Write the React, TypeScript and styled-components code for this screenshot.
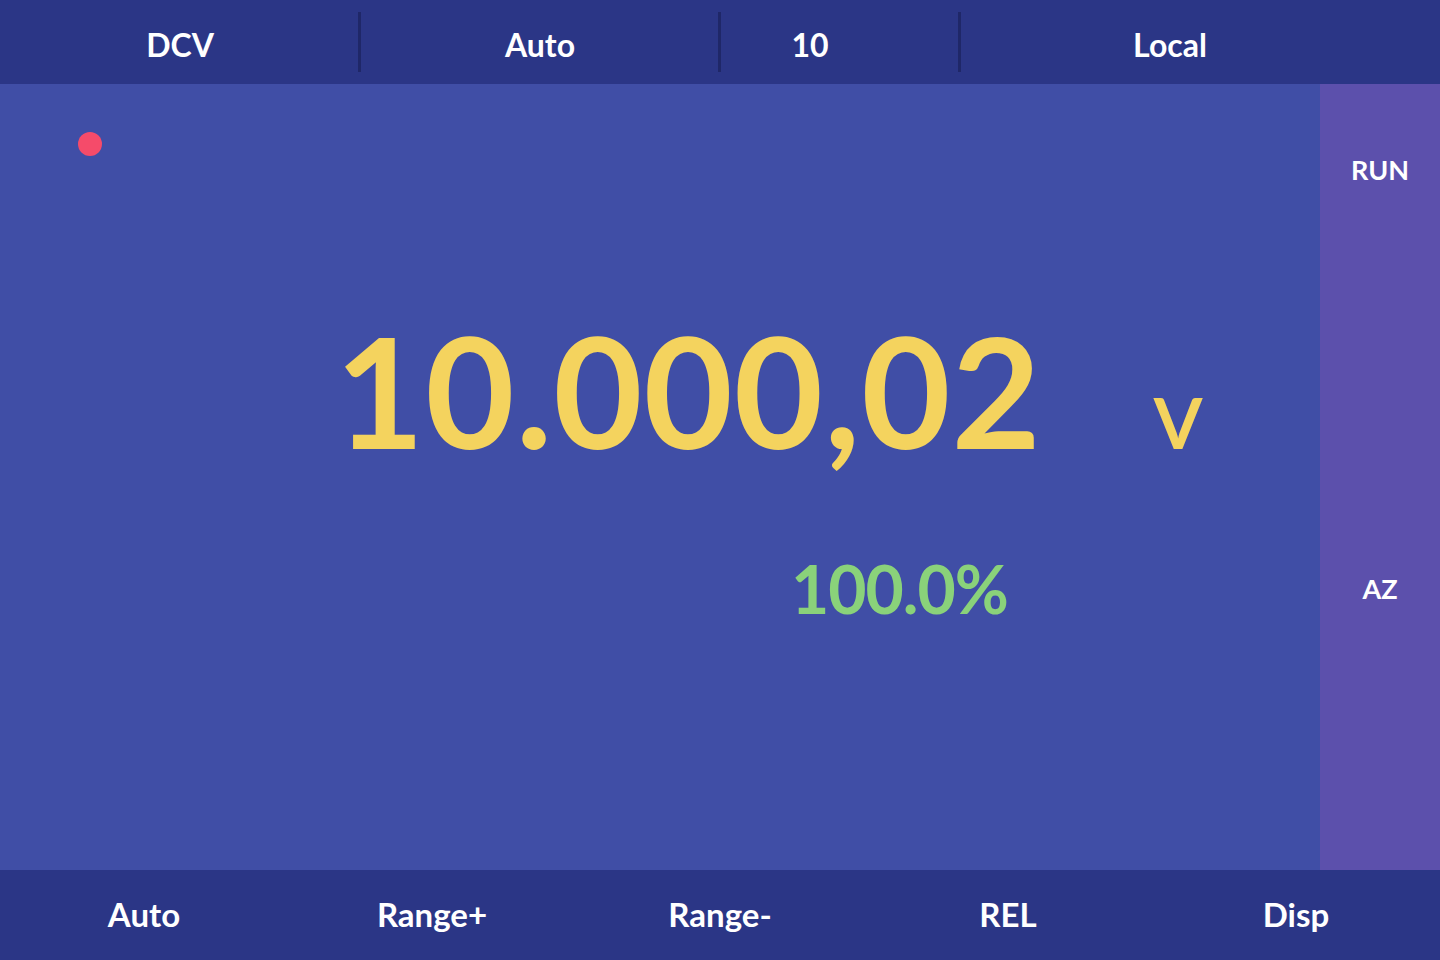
import * as React from 'react';
import styled, { createGlobalStyle } from 'styled-components';

const GlobalStyle = createGlobalStyle`
  html, body {
    margin: 0;
    padding: 0;
    background: #2b3686;
  }
  body {
    font-family: Lato, "Open Sans", sans-serif;
  }
`;

const Screen = styled.div`
  width: 1440px;
  height: 960px;
  display: grid;
  grid-template-rows: 84px 786px 90px;
  overflow: hidden;
`;

const StatusBar = styled.div`
  display: grid;
  grid-template-columns: 360px 360px 240px 420px 1fr;
  align-items: center;
  background: #2b3686;
`;

const StatusCell = styled.div<{ $divider?: boolean; $padRight?: number }>`
  position: relative;
  height: 60px;
  display: flex;
  align-items: center;
  justify-content: center;
  color: #ffffff;
  font-weight: 700;
  font-size: 32px;
  padding-top: 4px;
  padding-right: ${(p) => p.$padRight ?? 0}px;
  box-sizing: border-box;

  &::before {
    content: '';
    display: ${(p) => (p.$divider ? 'block' : 'none')};
    position: absolute;
    left: -2px;
    top: 0;
    bottom: 0;
    width: 3px;
    background: #1f2768;
  }
`;

const Middle = styled.div`
  display: grid;
  grid-template-columns: 1320px 120px;
`;

const Display = styled.div`
  background: #404ea6;
  display: flex;
  flex-direction: column;
`;

const Indicator = styled.div<{ $color: string }>`
  width: 24px;
  height: 24px;
  border-radius: 50%;
  background: ${(p) => p.$color};
  margin: 48px 0 0 78px;
`;

const Reading = styled.div`
  display: flex;
  align-items: baseline;
  padding-left: 335px;
  margin-top: 157px;
`;

const Value = styled.span`
  color: #f4d35e;
  font-weight: 700;
  font-size: 154px;
  line-height: 1;
  letter-spacing: 1px;
`;

const Unit = styled.span`
  color: #f4d35e;
  font-weight: 700;
  font-size: 70px;
  line-height: 1;
  margin-left: 112px;
`;

const Percent = styled.div`
  color: #8ad27a;
  font-weight: 700;
  font-size: 66px;
  line-height: 1;
  padding-left: 791px;
  margin-top: 89px;
  letter-spacing: -1px;
`;

const SidePanel = styled.div`
  background: #5c50ac;
  display: flex;
  flex-direction: column;
  align-items: center;
`;

const SideLabel = styled.div<{ $top: number }>`
  color: #ffffff;
  font-weight: 700;
  font-size: 27px;
  margin-top: ${(p) => p.$top}px;
`;

const SoftKeys = styled.div`
  display: grid;
  grid-template-columns: repeat(5, 1fr);
  align-items: center;
  background: #2b3686;
  padding-bottom: 2px;
`;

const SoftKey = styled.div`
  text-align: center;
  color: #ffffff;
  font-weight: 700;
  font-size: 33px;
`;

const status = [
  { label: 'DCV', divider: false, pad: 0 },
  { label: 'Auto', divider: true, pad: 0 },
  { label: '10', divider: true, pad: 60 },
  { label: 'Local', divider: true, pad: 0 },
];

const keys = ['Auto', 'Range+', 'Range-', 'REL', 'Disp'];

export default function App() {
  return (
    <>
      <GlobalStyle />
      <Screen>
        <StatusBar>
          {status.map((s) => (
            <StatusCell key={s.label} $divider={s.divider} $padRight={s.pad}>
              {s.label}
            </StatusCell>
          ))}
        </StatusBar>
        <Middle>
          <Display>
            <Indicator $color="#f54b6a" />
            <Reading>
              <Value>10.000,02</Value>
              <Unit>V</Unit>
            </Reading>
            <Percent>100.0%</Percent>
          </Display>
          <SidePanel>
            <SideLabel $top={69}>RUN</SideLabel>
            <SideLabel $top={386}>AZ</SideLabel>
          </SidePanel>
        </Middle>
        <SoftKeys>
          {keys.map((k) => (
            <SoftKey key={k}>{k}</SoftKey>
          ))}
        </SoftKeys>
      </Screen>
    </>
  );
}
